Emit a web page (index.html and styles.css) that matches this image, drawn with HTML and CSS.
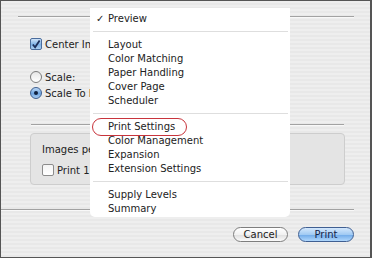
FILE: index.html
```html
<!DOCTYPE html>
<html>
  <head>
    <meta charset="utf-8" />
    <link rel="stylesheet" href="styles.css">
  </head>

  <body>
    <div class="window">
      <div class="rule rule-top"></div>

      <div class="options">
        <label class="opt">
          <span class="check checked">
            <svg viewBox="0 0 11 11" width="11" height="11">
              <path d="M2 5.5 L4.5 8.5 L9.5 1" fill="none" stroke="#1d2f5a" stroke-width="2" />
            </svg>
          </span>
          Center Image
        </label>
        <label class="opt opt-first-radio">
          <span class="radio"></span>
          Scale:
        </label>
        <label class="opt opt-radio">
          <span class="radio selected"></span>
          Scale To Fit
        </label>
      </div>

      <div class="rule rule-mid"></div>

      <div class="group">
        <div class="group-body">
          <div class="group-title">Images per page</div>
          <label class="opt">
            <span class="check"></span>
            Print 1 copy per page
          </label>
        </div>
      </div>

      <div class="rule rule-bottom"></div>

      <div class="buttons">
        <button class="btn">Cancel</button>
        <button class="btn btn-default">Print</button>
      </div>
    </div>

    <ul class="menu">
      <li class="item current">Preview</li>
      <li class="sep"></li>
      <li class="item">Layout</li>
      <li class="item">Color Matching</li>
      <li class="item">Paper Handling</li>
      <li class="item">Cover Page</li>
      <li class="item">Scheduler</li>
      <li class="sep"></li>
      <li class="item circled">Print Settings</li>
      <li class="item">Color Management</li>
      <li class="item">Expansion</li>
      <li class="item">Extension Settings</li>
      <li class="sep"></li>
      <li class="item">Supply Levels</li>
      <li class="item">Summary</li>
    </ul>
  </body>
</html>
```

FILE: styles.css
```css
body {
  margin: 0;
  font-family: "DejaVu Sans", sans-serif;
  font-size: 10px;
  color: #222;
  position: relative;
}

.window {
  width: 372px;
  height: 258px;
  box-sizing: border-box;
  border: 1px solid #555;
  border-right: 2px solid #555;
  background: repeating-linear-gradient(
    to bottom,
    #eeeeee 0,
    #eeeeee 2px,
    #e8e8e8 2px,
    #e8e8e8 4px
  );
  display: flex;
  flex-direction: column;
  overflow: hidden;
}

.rule {
  height: 0;
  border-top: 1px solid #a2a2a2;
  border-bottom: 1px solid #f8f8f8;
}

.rule-top {
  margin: 15px 16px 0 17px;
}

.rule-mid {
  margin: 24px 26px 0 30px;
}

.rule-bottom {
  margin: 24px 16px 0 0;
}

/* the popup menu hides the right part of these labels */
.options {
  margin-top: 19px;
  padding-left: 29px;
  width: 60px;
  overflow: hidden;
}

.opt {
  display: flex;
  align-items: center;
  gap: 3px;
  height: 14px;
  white-space: nowrap;
}

.opt-first-radio {
  margin-top: 19px;
}

.opt-radio {
  margin-top: 2px;
}

.check {
  width: 10px;
  height: 10px;
  border: 1px solid #8c8c8c;
  border-radius: 2px;
  background: linear-gradient(#f4f4f4, #ffffff);
  display: flex;
  align-items: center;
  justify-content: center;
  flex: none;
}

.check.checked {
  background: linear-gradient(#cfe3f8, #7fb2e6 55%, #a9cdf1);
  border-color: #4a6c9c;
}

.radio {
  width: 10px;
  height: 10px;
  border: 1px solid #7c7c7c;
  border-radius: 50%;
  background: linear-gradient(#e6e6e6, #ffffff);
  flex: none;
  position: relative;
}

.radio.selected {
  background: linear-gradient(#bcd8f6, #6fa6e2 55%, #a7cbf1);
  border-color: #3e5f90;
}

.radio.selected::after {
  content: "";
  position: absolute;
  left: 3px;
  top: 3px;
  width: 4px;
  height: 4px;
  border-radius: 50%;
  background: #10203e;
}

.group {
  margin: 7px 25px 0 29px;
  height: 52px;
  box-sizing: border-box;
  border: 1px solid #cdcdcd;
  border-radius: 4px;
  background: #e4e4e4;
  padding: 9px 0 0 11px;
}

.group-body {
  width: 48px;
  overflow: hidden;
  white-space: nowrap;
}

.group-title {
  height: 14px;
  line-height: 14px;
  margin-bottom: 6px;
}

.buttons {
  display: flex;
  justify-content: flex-end;
  gap: 10px;
  margin: 16px 16px 0 0;
}

.btn {
  font-family: "DejaVu Sans", sans-serif;
  font-size: 10px;
  color: #222;
  height: 15px;
  width: 55px;
  padding: 0;
  border: 1px solid #7e7e7e;
  border-radius: 8px;
  background: linear-gradient(#ffffff, #f2f2f2 50%, #dedede 51%, #fbfbfb);
  line-height: 13px;
}

.btn-default {
  width: 56px;
  color: #14234a;
  border-color: #3f5f92;
  background: linear-gradient(#d3e7fc, #a2cbf3 50%, #6ea9e8 51%, #b0d7fc);
}

.menu {
  position: absolute;
  left: 90px;
  top: 8px;
  width: 200px;
  height: 209px;
  box-sizing: border-box;
  margin: 0;
  padding: 4px 0 0 0;
  list-style: none;
  background: #fff;
  border-radius: 0 0 5px 5px;
}

.item {
  height: 14px;
  line-height: 14px;
  padding-left: 18px;
  position: relative;
  white-space: nowrap;
}

.current::before {
  content: "\2713";
  position: absolute;
  left: 6px;
}

.sep {
  height: 1px;
  margin: 5px 2px 6px 3px;
  background: #dedede;
}

.circled::after {
  content: "";
  position: absolute;
  left: 2px;
  top: -2px;
  width: 93px;
  height: 16px;
  border: 1px solid #c8343c;
  border-radius: 9px;
}
```
